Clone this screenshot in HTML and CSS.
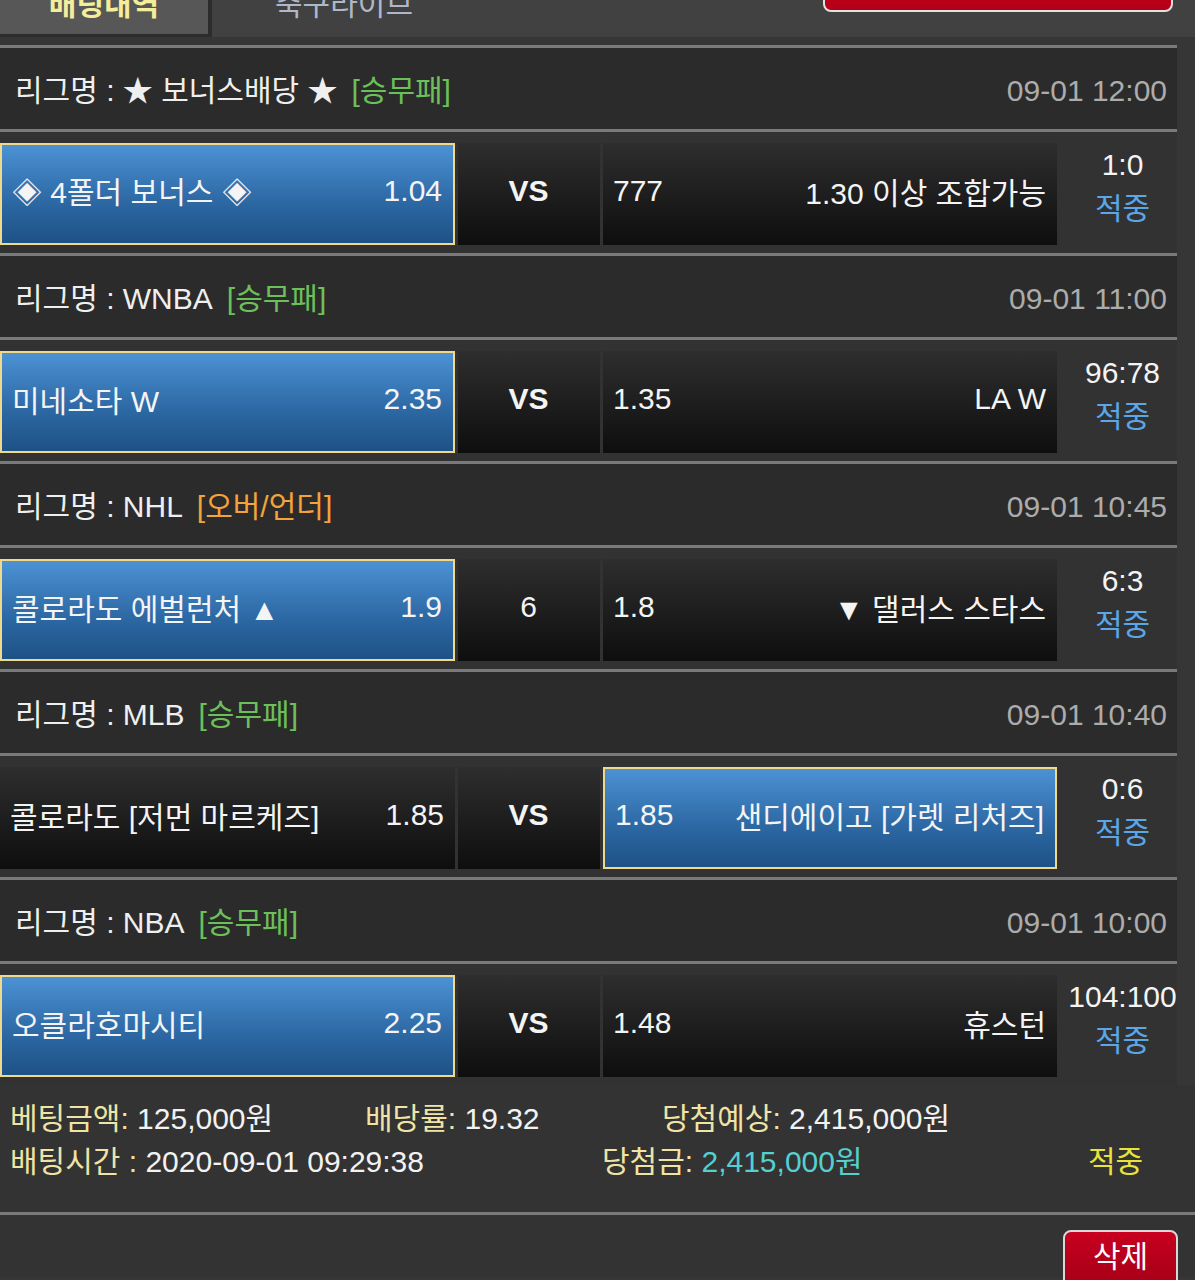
FILE: index.html
```html
<!DOCTYPE html>
<html lang="ko">
<head>
<meta charset="utf-8">
<title>배팅내역</title>
<link rel="stylesheet" href="styles.css">
</head>
<body>
<div class="topbar">
  <div class="tab active"><span>배팅내역</span></div>
  <div class="tab"><span>축구라이브</span></div>
  <div class="redbtn"></div>
</div>

<div class="list">
  <div class="league">
    <div class="lname">리그명 : ★ 보너스배당 ★<span class="tag green">[승무패]</span></div>
    <div class="time">09-01 12:00</div>
  </div>
  <div class="match">
    <div class="cell home sel"><span>◈ 4폴더 보너스 ◈</span><span>1.04</span></div>
    <div class="cell mid vs">VS</div>
    <div class="cell away"><span>777</span><span>1.30 이상 조합가능</span></div>
    <div class="score"><div>1:0</div><div class="hit">적중</div></div>
  </div>

  <div class="league">
    <div class="lname">리그명 : WNBA<span class="tag green">[승무패]</span></div>
    <div class="time">09-01 11:00</div>
  </div>
  <div class="match">
    <div class="cell home sel"><span>미네소타 W</span><span>2.35</span></div>
    <div class="cell mid vs">VS</div>
    <div class="cell away"><span>1.35</span><span>LA W</span></div>
    <div class="score"><div>96:78</div><div class="hit">적중</div></div>
  </div>

  <div class="league">
    <div class="lname">리그명 : NHL<span class="tag orange">[오버/언더]</span></div>
    <div class="time">09-01 10:45</div>
  </div>
  <div class="match">
    <div class="cell home sel"><span>콜로라도 에벌런처 ▲</span><span>1.9</span></div>
    <div class="cell mid">6</div>
    <div class="cell away"><span>1.8</span><span>▼ 댈러스 스타스</span></div>
    <div class="score"><div>6:3</div><div class="hit">적중</div></div>
  </div>

  <div class="league">
    <div class="lname">리그명 : MLB<span class="tag green">[승무패]</span></div>
    <div class="time">09-01 10:40</div>
  </div>
  <div class="match">
    <div class="cell home"><span>콜로라도 [저먼 마르케즈]</span><span>1.85</span></div>
    <div class="cell mid vs">VS</div>
    <div class="cell away sel"><span>1.85</span><span>샌디에이고 [가렛 리처즈]</span></div>
    <div class="score"><div>0:6</div><div class="hit">적중</div></div>
  </div>

  <div class="league">
    <div class="lname">리그명 : NBA<span class="tag green">[승무패]</span></div>
    <div class="time">09-01 10:00</div>
  </div>
  <div class="match">
    <div class="cell home sel"><span>오클라호마시티</span><span>2.25</span></div>
    <div class="cell mid vs">VS</div>
    <div class="cell away"><span>1.48</span><span>휴스턴</span></div>
    <div class="score"><div>104:100</div><div class="hit">적중</div></div>
  </div>
</div>

<div class="summary">
  <div class="srow">
    <div class="si w1"><span class="lbl">베팅금액:</span> 125,000원</div>
    <div class="si w2"><span class="lbl">배당률:</span> 19.32</div>
    <div class="si"><span class="lbl">당첨예상:</span> 2,415,000원</div>
  </div>
  <div class="srow">
    <div class="si w3"><span class="lbl">배팅시간 :</span> 2020-09-01 09:29:38</div>
    <div class="si w4"><span class="lbl">당첨금:</span> <span class="cyan">2,415,000원</span></div>
    <div class="si result">적중</div>
  </div>
</div>

<div class="actions">
  <button class="del" type="button">삭제</button>
</div>
</body>
</html>
```

FILE: styles.css
```css
* { box-sizing: border-box; }
html, body { margin: 0; padding: 0; }
body {
  width: 1195px;
  height: 1280px;
  overflow: hidden;
  background: #363636;
  font-family: "Liberation Sans", "Noto Sans CJK KR", sans-serif;
  font-size: 30px;
  color: #f2f2f2;
}

/* top tabs */
.topbar {
  height: 37px;
  background: #414141;
  display: flex;
  align-items: flex-start;
  overflow: hidden;
}
.tab {
  height: 37px;
  width: 264px;
  display: flex;
  justify-content: center;
  color: #aeb8c8;
}
.tab span {
  display: block;
  line-height: 36px;
  margin-top: -13px;
}
.tab.active {
  width: 212px;
  background: #575757;
  border-right: 4px solid #2c2c2c;
  border-bottom: 3px solid #2c2c2c;
  color: #f4ee9a;
  font-weight: bold;
}
.redbtn {
  margin-left: auto;
  margin-right: 22px;
  margin-top: -30px;
  width: 350px;
  height: 42px;
  background: linear-gradient(#d0001f, #b30017);
  border: 2px solid #e2e2e2;
  border-radius: 8px;
}

/* list */
.list {
  width: 1177px;
  margin-top: 8px;
}
.league {
  height: 84px;
  border-top: 3px solid #7a7a7a;
  background: #2b2b2b;
  display: flex;
  align-items: center;
  justify-content: space-between;
  padding: 5px 10px 0 15px;
  line-height: 40px;
}
.lname { color: #efefef; white-space: nowrap; }
.tag { margin-left: 14px; }
.green { color: #6cc05a; }
.orange { color: #f2a33a; }
.time { color: #acacac; }

.match {
  height: 124px;
  border-top: 3px solid #7a7a7a;
  background: #323232;
  padding-top: 11px;
  display: flex;
  gap: 3px;
}
.cell {
  flex-shrink: 0;
  height: 102px;
  display: flex;
  align-items: center;
  justify-content: space-between;
  padding: 0 11px 6px 10px;
  background: linear-gradient(#2e2e2e, #0e0e0e);
  color: #f4f4f4;
  white-space: nowrap;
}
.home { width: 455px; }
.mid { width: 142px; justify-content: center; }
.away { width: 454px; }
.vs { font-weight: bold; }
.sel {
  background: linear-gradient(#4c92d4, #2e6aa6 55%, #1d5285);
  border: 2px solid #f1d98b;
}
.score {
  flex-shrink: 0;
  width: 125px;
  height: 102px;
  padding-bottom: 14px;
  display: flex;
  flex-direction: column;
  align-items: center;
  justify-content: center;
  line-height: 44px;
  color: #f4f4f4;
  white-space: nowrap;
}
.hit { color: #5ba6e6; }

/* summary */
.summary {
  height: 127px;
  background: #333333;
  padding: 12px 0 0 10px;
}
.srow {
  display: flex;
  line-height: 43px;
  white-space: nowrap;
}
.w1 { width: 355px; }
.w2 { width: 297px; }
.w3 { width: 592px; }
.w4 { width: 486px; }
.lbl { color: #efe4a6; }
.cyan { color: #55cfcf; }
.result { color: #e8e23c; }

/* actions */
.actions {
  height: 65px;
  border-top: 3px solid #7a7a7a;
  background: #333333;
  padding-top: 15px;
  display: flex;
  justify-content: flex-end;
  padding-right: 17px;
}
.del {
  width: 115px;
  height: 62px;
  margin: 0;
  padding: 0;
  background: linear-gradient(#c8001f, #a30016);
  border: 2px solid #d8d8d8;
  border-radius: 8px;
  color: #ffffff;
  font-family: inherit;
  font-size: 30px;
  line-height: 50px;
  display: flex;
  justify-content: center;
  align-items: flex-start;
}
```
